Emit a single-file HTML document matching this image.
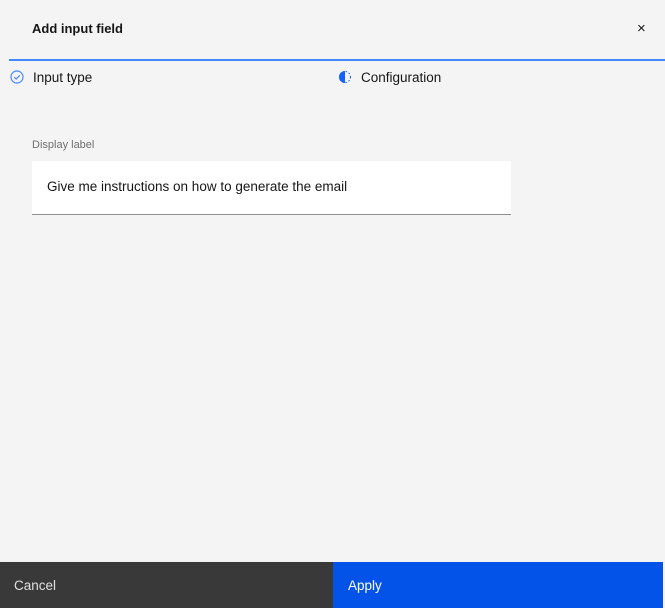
<!DOCTYPE html>
<html><head><style>
body{margin:0;width:665px;height:608px;background:#f4f4f4;font-family:"Liberation Sans",sans-serif;position:relative;overflow:hidden;color:#161616}
.t{position:absolute;left:32px;top:21px;font-size:13px;font-weight:bold}
.x{position:absolute;left:637px;top:20px;font-size:15px}
.line{position:absolute;left:9px;right:0;top:59px;height:2px;background:#4589ff}
.s{position:absolute;top:70px;font-size:13.5px;color:#161616}
.lbl{position:absolute;left:32px;top:139px;font-size:11px;color:#6f6f6f}
.f{position:absolute;left:32px;top:161px;width:479px;height:54px;background:#fff;border-bottom:1px solid #8d8d8d;box-sizing:border-box;font-size:13.5px;padding:18px 0 0 15px}
.c{position:absolute;left:0;top:562px;width:333px;height:46px;background:#393939;color:#e0e0e0;font-size:13.5px;box-sizing:border-box;padding:16px 14px}
.a{position:absolute;left:333px;top:562px;width:330px;height:46px;background:#0353e9;color:#fff;font-size:13.5px;box-sizing:border-box;padding:16px 15px}
</style></head><body>
<div class="t">Add input field</div>
<div class="x">×</div>
<div class="line"></div>
<svg style="position:absolute;left:10px;top:70px" width="14" height="14" viewBox="0 0 14 14"><circle cx="7" cy="7" r="6" fill="none" stroke="#4589ff" stroke-width="1.2"/><path d="M4.3 7.2l1.9 1.8 3.6-3.7" fill="none" stroke="#4589ff" stroke-width="1.2"/></svg>
<div class="s" style="left:33px">Input type</div>
<svg style="position:absolute;left:338px;top:70px" width="14" height="14" viewBox="0 0 14 14"><path d="M7 1a6 6 0 0 0 0 12z" fill="#0f62fe"/><circle cx="7" cy="7" r="5.5" fill="none" stroke="#0f62fe" stroke-width="1" stroke-dasharray="1.5 1.8"/></svg>
<div class="s" style="left:361px">Configuration</div>
<div class="lbl">Display label</div>
<div class="f">Give me instructions on how to generate the email</div>
<div class="c">Cancel</div>
<div class="a">Apply</div>
</body></html>
